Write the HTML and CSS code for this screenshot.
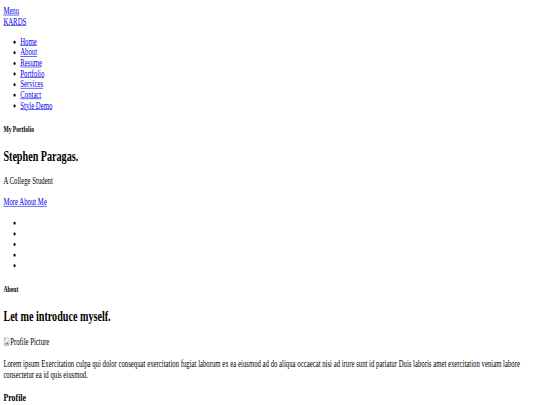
FILE: index.html
```html
<!DOCTYPE html>
<html>
<head>
<meta charset="utf-8">
<title>KARDS</title>
<link rel="stylesheet" href="styles.css">
</head>
<body>
<div class="stage">
  <header class="site-header">
    <div><a href="#">Menu</a></div>
    <div><a href="#">KARDS</a></div>
    <ul class="nav-list">
      <li><a href="#">Home</a></li>
      <li><a href="#">About</a></li>
      <li><a href="#">Resume</a></li>
      <li><a href="#">Portfolio</a></li>
      <li><a href="#">Services</a></li>
      <li><a href="#">Contact</a></li>
      <li><a href="#">Style Demo</a></li>
    </ul>
  </header>
  <section class="intro">
    <h5 class="kicker">My Portfolio</h5>
    <h2 class="title">Stephen Paragas.</h2>
    <p class="tagline">A College Student</p>
    <a href="#">More About Me</a>
    <ul class="social">
      <li>&nbsp;</li>
      <li>&nbsp;</li>
      <li>&nbsp;</li>
      <li>&nbsp;</li>
      <li>&nbsp;</li>
    </ul>
  </section>
  <section class="about">
    <h5 class="kicker">About</h5>
    <h2 class="title">Let me introduce myself.</h2>
    <div class="profile-pic"><svg class="broken" width="16" height="16" viewBox="0 0 16 16"><path d="M1.5 1.5h9l3 3v10h-12z" fill="#f4f4f4" stroke="#9a9a9a"/><path d="M3 13l3-4 2 2 2-3 3 5z" fill="#5fa84a"/><circle cx="5" cy="5" r="1.3" fill="#6fa0d8"/></svg><span>Profile Picture</span></div>
    <p class="lead">Lorem ipsum Exercitation culpa qui dolor consequat exercitation fugiat laborum ex ea eiusmod ad do aliqua occaecat nisi ad irure sunt id pariatur Duis laboris amet exercitation veniam labore consectetur ea id quis eiusmod.</p>
    <h3 class="sub">Profile</h3>
  </section>
</div>
</body>
</html>
```

FILE: styles.css
```css
html, body {
  margin: 0;
  padding: 0;
  overflow: hidden;
  background: #fff;
}
.stage {
  width: 1280px;
  box-sizing: border-box;
  padding: 9.5px 8px 8px;
  transform: scale(0.421875, 0.59);
  transform-origin: 0 0;
  font-family: "Liberation Serif", "Times New Roman", serif;
  font-size: 16px;
  color: #000;
}
.stage a {
  color: #0000ee;
  text-decoration: underline;
}
.kicker {
  margin: 24px 0 24px;
}
.tagline {
  margin-bottom: 17.5px;
}
.social {
  margin-top: 17.5px;
}
.profile-pic {
  line-height: 20px;
}
.broken {
  vertical-align: -2px;
}
.lead {
  margin-top: 18px;
}
```
